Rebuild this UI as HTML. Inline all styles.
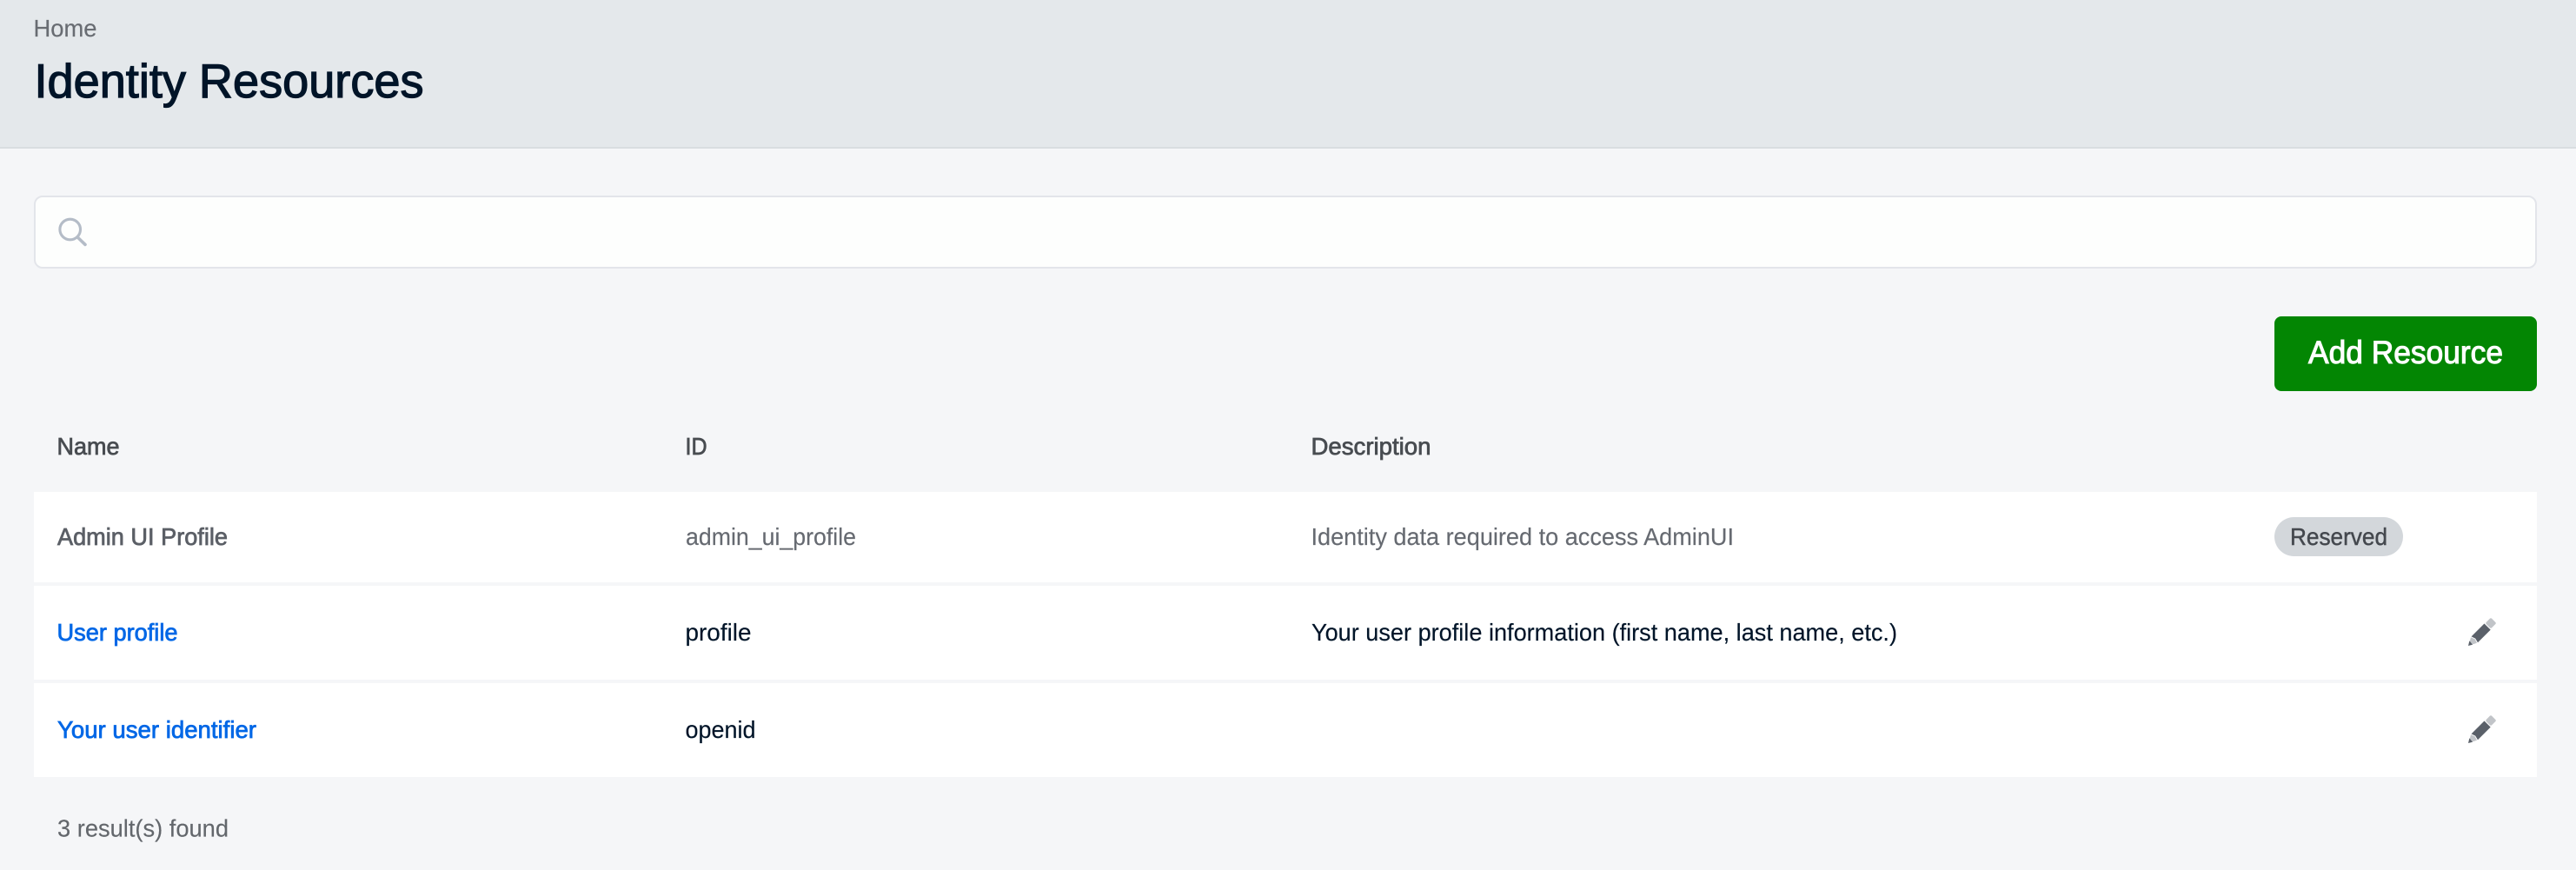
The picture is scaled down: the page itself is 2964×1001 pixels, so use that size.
<!DOCTYPE html>
<html lang="en">
<head>
<meta charset="utf-8">
<title>Identity Resources</title>
<style>
html,body{margin:0;padding:0;width:2964px;height:1001px;overflow:hidden;background:#f5f6f8;}
.abs{position:absolute;}
#hdr{left:0;top:0;width:2964px;height:169px;background:#e4e8eb;border-bottom:2px solid #d9dde0;}
#search{left:39px;top:225px;width:2876px;height:80px;background:#fdfefd;border:2px solid #e3e5ea;border-radius:10px;}
#btn{left:2617px;top:364px;width:302px;height:86px;background:#038603;border-radius:8px;}
.row{left:39px;width:2880px;background:#fff;}
#pill{left:2617px;top:595px;width:148px;height:45px;background:#d3d7db;border-radius:23px;}
svg{position:absolute;left:0;top:0;}
text{font-family:"Liberation Sans",Arial,sans-serif;font-size:27.5px;stroke-width:.15px;stroke:currentColor;}
.m{stroke-width:.75px;}
</style>
</head>
<body>
<div class="abs" id="hdr"></div>
<div class="abs" id="search"></div>
<div class="abs" id="btn"></div>
<div class="abs row" style="top:566px;height:104px"></div>
<div class="abs row" style="top:674px;height:108px"></div>
<div class="abs row" style="top:786px;height:108px"></div>
<div class="abs" id="pill"></div>
<svg width="2964" height="1001" viewBox="0 0 2964 1001" xmlns="http://www.w3.org/2000/svg">
  <text x="38.5" y="42" fill="#686c72" color="#686c72" textLength="73" lengthAdjust="spacingAndGlyphs">Home</text>
  <text x="39.5" y="112" fill="#001428" color="#001428" style="font-size:55px;stroke-width:1.3px" textLength="448" lengthAdjust="spacingAndGlyphs">Identity Resources</text>

  <circle cx="80.7" cy="264" r="11.8" fill="none" stroke="#b4bcc7" stroke-width="3.1"/>
  <path d="M89.3 273 L98 281.4" fill="none" stroke="#b4bcc7" stroke-width="3.6" stroke-linecap="round"/>

  <text x="2656" y="418" fill="#fff" color="#fff" style="font-size:37.5px;stroke-width:1.05px" textLength="224" lengthAdjust="spacingAndGlyphs">Add Resource</text>

  <text x="65.5" y="523" class="m" fill="#484c51" color="#484c51" textLength="72" lengthAdjust="spacingAndGlyphs">Name</text>
  <text x="788.5" y="523" class="m" fill="#484c51" color="#484c51" textLength="25" lengthAdjust="spacingAndGlyphs">ID</text>
  <text x="1508.5" y="523" class="m" fill="#484c51" color="#484c51" textLength="138" lengthAdjust="spacingAndGlyphs">Description</text>

  <text x="66" y="627" class="m" fill="#5b5f66" color="#5b5f66" textLength="196" lengthAdjust="spacingAndGlyphs">Admin UI Profile</text>
  <text x="789" y="627" fill="#666a71" color="#666a71" textLength="196" lengthAdjust="spacingAndGlyphs">admin_ui_profile</text>
  <text x="1508.5" y="627" fill="#666a71" color="#666a71" textLength="486.5" lengthAdjust="spacingAndGlyphs">Identity data required to access AdminUI</text>
  <text x="2635" y="627" class="m" fill="#44484e" color="#44484e" style="stroke-width:.45px" textLength="112" lengthAdjust="spacingAndGlyphs">Reserved</text>

  <text x="65.5" y="737" class="m" fill="#0067e6" color="#0067e6" textLength="139" lengthAdjust="spacingAndGlyphs">User profile</text>
  <text x="788.5" y="737" fill="#001428" color="#001428" textLength="76" lengthAdjust="spacingAndGlyphs">profile</text>
  <text x="1509" y="737" fill="#001428" color="#001428" textLength="674" lengthAdjust="spacingAndGlyphs">Your user profile information (first name, last name, etc.)</text>

  <text x="66" y="849" class="m" fill="#0067e6" color="#0067e6" textLength="229" lengthAdjust="spacingAndGlyphs">Your user identifier</text>
  <text x="788.5" y="849" fill="#001428" color="#001428" textLength="81" lengthAdjust="spacingAndGlyphs">openid</text>

  <text x="66" y="962.5" fill="#63676c" color="#63676c" textLength="197" lengthAdjust="spacingAndGlyphs">3 result(s) found</text>

  <g transform="translate(2840 711)">
    <rect x="21.5" y="1.5" width="9" height="9" rx="1.6" transform="rotate(45 26 6)" fill="#c1c4c8"/>
    <path d="M18.5 6.5 L25.7 13.6 L11 28.3 L8.2 23.6 L3.6 21.4 Z" fill="#5a6069"/>
    <path d="M3 22.3 L7.6 24.2 L10 28.8 L4.4 30.6 L1.6 27.6 Z" fill="#c1c4c8"/>
    <path d="M0 32 L1.4 26.2 L5 30.7 Z" fill="#5a6069"/>
  </g>
  <g transform="translate(2840 823)">
    <rect x="21.5" y="1.5" width="9" height="9" rx="1.6" transform="rotate(45 26 6)" fill="#c1c4c8"/>
    <path d="M18.5 6.5 L25.7 13.6 L11 28.3 L8.2 23.6 L3.6 21.4 Z" fill="#5a6069"/>
    <path d="M3 22.3 L7.6 24.2 L10 28.8 L4.4 30.6 L1.6 27.6 Z" fill="#c1c4c8"/>
    <path d="M0 32 L1.4 26.2 L5 30.7 Z" fill="#5a6069"/>
  </g>
</svg>
</body>
</html>
